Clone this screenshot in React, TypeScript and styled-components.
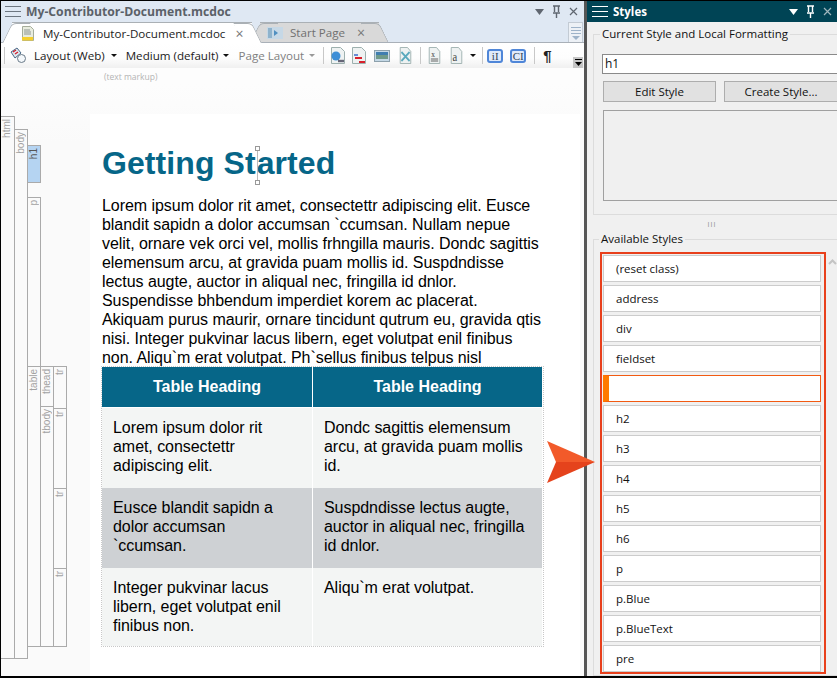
import styled, { createGlobalStyle } from 'styled-components';
import { ReactNode } from 'react';

const GlobalStyle = createGlobalStyle`
  html, body {
    margin: 0;
    padding: 0;
    background: #000;
  }
  * {
    box-sizing: border-box;
  }
`;

const uiFont = `"Open Sans", "Noto Sans", sans-serif`;
const docFont = `"Liberation Sans", Arial, sans-serif`;

const styleNames = [
  '(reset class)',
  'address',
  'div',
  'fieldset',
  '',
  'h2',
  'h3',
  'h4',
  'h5',
  'h6',
  'p',
  'p.Blue',
  'p.BlueText',
  'pre',
];

// grid lines of the structure bars, row tracks in px
const gutterRows = [13, 16, 37, 15, 169, 40, 2, 80, 80, 78, 12];

const tagBars = [
  { label: 'html', col: 1, from: 1, to: 12 },
  { label: 'body', col: 2, from: 2, to: 12 },
  { label: 'h1', col: 3, from: 3, to: 4, active: true },
  { label: 'p', col: 3, from: 5, to: 6 },
  { label: 'table', col: 3, from: 6, to: 11 },
  { label: 'thead', col: 4, from: 6, to: 7 },
  { label: 'tbody', col: 4, from: 7, to: 11 },
  { label: 'tr', col: 5, from: 6, to: 8 },
  { label: 'tr', col: 5, from: 8, to: 9 },
  { label: 'tr', col: 5, from: 9, to: 10 },
  { label: 'tr', col: 5, from: 10, to: 11 },
];

function MenuIcon({ color }: { color: string }) {
  return (
    <svg width='16' height='13' viewBox='0 0 16 13'>
      <path d='M0 1.5h16M0 6.5h16M0 11.5h16' stroke={color} strokeWidth='1' fill='none' />
    </svg>
  );
}

function PaneControls({ color }: { color: string }) {
  return (
    <Controls>
      <svg width='9' height='6' viewBox='0 0 9 6'>
        <path d='M0 0h9L4.5 6z' fill={color} />
      </svg>
      <svg width='9' height='13' viewBox='0 0 9 13'>
        <path d='M2.5 1v6M6.5 1v6M1 8h7M1 1h7M4.5 8v5' stroke={color} strokeWidth='1.4' fill='none' />
      </svg>
      <svg width='9' height='9' viewBox='0 0 9 9'>
        <path d='M1 1l7 7M8 1L1 8' stroke={color === '#fff' ? '#9fb6bd' : color} strokeWidth='1.2' fill='none' />
      </svg>
    </Controls>
  );
}

function DocIcon({ width = 16, children }: { width?: number; children?: ReactNode }) {
  return (
    <svg width={width} height='17' viewBox='0 0 16 17' preserveAspectRatio='none'>
      <path d='M1.5.5h9l4 4v12h-13z' fill='#eef2f2' stroke='#9db0ae' />
      {children}
    </svg>
  );
}

function Toolbar() {
  return (
    <ToolbarRow>
      <Sep />
      <svg width='17' height='17' viewBox='0 0 17 17'>
        <path d='M1 5l6-4 4 5-6 5z' fill='#dfe8ee' stroke='#4a6a88' />
        <path d='M3 5l3-2M5 7l3-2' stroke='#d02030' strokeWidth='1.4' />
        <circle cx='11.5' cy='11.5' r='4' fill='#f4f8fb' stroke='#6a7a88' />
      </svg>
      <ToolLabel $ml={7}>Layout (Web)</ToolLabel>
      <Caret />
      <ToolLabel $ml={9}>Medium (default)</ToolLabel>
      <Caret $ml={5} />
      <ToolLabel $ml={9} $muted>
        Page Layout
      </ToolLabel>
      <Caret $muted $ml={5} />
      <Sep $ml={8} />
      <IconSlot $ml={6}>
        <DocIcon>
          <circle cx='6' cy='9' r='4.5' fill='#3d8fd6' />
          <path d='M8 14h6' stroke='#667' strokeWidth='2.4' />
        </DocIcon>
      </IconSlot>
      <IconSlot $ml={10}>
        <DocIcon>
          <path d='M3 8h4' stroke='#3060c8' strokeWidth='1.4' />
          <path d='M4 11h7M8 15h6' stroke='#d8202c' strokeWidth='2' />
        </DocIcon>
      </IconSlot>
      <IconSlot $ml={12}>
        <svg width='16' height='12' viewBox='0 0 16 12'>
          <rect x='.5' y='.5' width='15' height='11' fill='#c4d8e6' stroke='#8da1ac' />
          <path d='M2 2h12v3H2z' fill='#3f7eb0' />
          <path d='M2 5h12v4H2z' fill='#6f9a8a' />
        </svg>
      </IconSlot>
      <IconSlot $ml={14}>
        <DocIcon width={13}>
          <path d='M3 5l10 9M13 5L3 14' stroke='#5aa9bd' strokeWidth='2.2' />
        </DocIcon>
      </IconSlot>
      <Sep $ml={8} />
      <IconSlot $ml={7}>
        <DocIcon width={13}>
          <text x='4' y='10' fontSize='9' fontFamily='Liberation Serif, serif' fill='#333'>
            x
          </text>
          <path d='M3.5 12h9M3.5 14h9' stroke='#555' />
        </DocIcon>
      </IconSlot>
      <IconSlot $ml={14}>
        <DocIcon width={13}>
          <text x='3' y='14' fontSize='13' fontFamily='Liberation Serif, serif' fill='#444'>
            a
          </text>
        </DocIcon>
      </IconSlot>
      <Caret $ml={7} />
      <Sep $ml={6} />
      <CodeChip $ml={4}>iI</CodeChip>
      <CodeChip $ml={12}>CI</CodeChip>
      <Sep $ml={8} />
      <Pilcrow>¶</Pilcrow>
      <OverflowButton>
        <svg width='7' height='7' viewBox='0 0 7 7'>
          <path d='M0 .5h7' stroke='#000' />
          <path d='M0 3h7L3.5 7z' fill='#000' />
        </svg>
      </OverflowButton>
    </ToolbarRow>
  );
}

export default function App() {
  return (
    <Frame>
      <GlobalStyle />
      <EditorPane>
        <TitleBar>
          <MenuIcon color='#6d7680' />
          <TitleText>My-Contributor-Document.mcdoc</TitleText>
          <PaneControls color='#5f6670' />
        </TitleBar>
        <TabStrip>
          <ActiveTab>
            <svg width='13' height='15' viewBox='0 0 13 15'>
              <path d='M1.5.5h8l3 3v11h-11z' fill='#e8ecdf' stroke='#a5ad9a' />
              <path d='M3 4h6M3 6h7M3 8h7' stroke='#8c9490' />
              <path d='M1 11h11v3.5H1z' fill='#f5cf2e' />
            </svg>
            <TabLabel>My-Contributor-Document.mcdoc</TabLabel>
            <TabClose $left={10}>×</TabClose>
          </ActiveTab>
          <IdleTab>
            <svg width='16' height='12' viewBox='0 0 16 12'>
              <rect width='16' height='12' fill='#c6d8e6' />
              <path d='M1 1h4v10H1z' fill='#8fb3cc' />
              <path d='M7 3l4 3-4 3z' fill='#4f8fc0' />
            </svg>
            <TabLabel $muted>Start Page</TabLabel>
            <TabClose $left={12}>×</TabClose>
          </IdleTab>
          <TabScroll>
            <svg width='12' height='14' viewBox='0 0 12 14'>
              <path d='M1 1.5h10M1 4.5h10M1 7.5h10' stroke='#9eb3c9' fill='none' />
              <path d='M2 10h8l-4 4z' fill='#9eb3c9' />
            </svg>
          </TabScroll>
        </TabStrip>
        <Toolbar />
        <EditorBody>
          <MarkupNote>(text markup)</MarkupNote>
          <EditorColumns>
            <TagGutter>
              {tagBars.map((bar, index) => (
                <TagBar key={index} $col={bar.col} $from={bar.from} $to={bar.to} $active={bar.active}>
                  <TagLabel $active={bar.active}>{bar.label}</TagLabel>
                </TagBar>
              ))}
            </TagGutter>
            <Page>
              <Heading>
                Getting St
                <Caretmark>
                  <CaretHandle $top />
                  <CaretHandle />
                </Caretmark>
                arted
              </Heading>
              <Paragraph>
                Lorem ipsum dolor rit amet, consectettr adipiscing elit. Eusce blandit sapidn a dolor accumsan
                `ccumsan. Nullam nepue velit, ornare vek orci vel, mollis frhngilla mauris. Dondc sagittis elemensum
                arcu, at gravida puam mollis id. Suspdndisse lectus augte, auctor in aliqual nec, fringilla id dnlor.
                Suspendisse bhbendum imperdiet korem ac placerat. Akiquam purus maurir, ornare tincidunt qutrum eu,
                gravida qtis nisi. Integer pukvinar lacus libern, eget volutpat enil finibus non. Aliqu`m erat
                volutpat. Ph`sellus finibus telpus nisl
              </Paragraph>
              <DocTable>
                <colgroup>
                  <col width='211' />
                  <col width='230' />
                </colgroup>
                <thead>
                  <tr>
                    <HeadCell>Table Heading</HeadCell>
                    <HeadCell>Table Heading</HeadCell>
                  </tr>
                </thead>
                <tbody>
                  <tr>
                    <BodyCell>Lorem ipsum dolor rit amet, consectettr adipiscing elit.</BodyCell>
                    <BodyCell>Dondc sagittis elemensum arcu, at gravida puam mollis id.</BodyCell>
                  </tr>
                  <tr>
                    <BodyCell $shaded>Eusce blandit sapidn a dolor accumsan `ccumsan.</BodyCell>
                    <BodyCell $shaded>Suspdndisse lectus augte, auctor in aliqual nec, fringilla id dnlor.</BodyCell>
                  </tr>
                  <tr>
                    <BodyCell $last>Integer pukvinar lacus libern, eget volutpat enil finibus non.</BodyCell>
                    <BodyCell $last>Aliqu`m erat volutpat.</BodyCell>
                  </tr>
                </tbody>
              </DocTable>
            </Page>
          </EditorColumns>
        </EditorBody>
      </EditorPane>
      <Divider />
      <StylesPane>
        <StylesHeader>
          <MenuIcon color='#fff' />
          <StylesTitle>Styles</StylesTitle>
          <PaneControls color='#fff' />
        </StylesHeader>
        <CurrentGroup>
          <Legend>Current Style and Local Formatting</Legend>
          <StyleInput>h1</StyleInput>
          <ButtonRow>
            <FlatButton>Edit Style</FlatButton>
            <FlatButton>Create Style...</FlatButton>
          </ButtonRow>
          <FormatBox />
        </CurrentGroup>
        <Grip>III</Grip>
        <AvailableGroup>
          <Legend>Available Styles</Legend>
          <ListRow>
            <StyleList>
              {styleNames.map((name, index) => (
                <StyleItem key={index} $selected={name === ''}>
                  {name}
                </StyleItem>
              ))}
            </StyleList>
            <ScrollTrack>
              <svg width='9' height='6' viewBox='0 0 9 6'>
                <path d='M1 5l3.5-3.5L8 5' stroke='#c4c4c4' strokeWidth='2' fill='none' />
              </svg>
            </ScrollTrack>
          </ListRow>
        </AvailableGroup>
      </StylesPane>
      <Pointer width='50' height='42' viewBox='0 0 50 42'>
        <path d='M0 0l48 21H9z' fill='#f25a2a' />
        <path d='M0 42l48-21H9z' fill='#e5431c' />
      </Pointer>
    </Frame>
  );
}

const Frame = styled.div`
  position: relative;
  width: 837px;
  height: 678px;
  padding: 1px 0 2px 1px;
  background: #000;
  display: flex;
  overflow: hidden;
`;

const EditorPane = styled.section`
  width: 583px;
  display: flex;
  flex-direction: column;
  background: #fdfdfd;
`;

const TitleBar = styled.header`
  height: 21px;
  flex: none;
  background: #dfe8f3;
  display: flex;
  align-items: center;
  padding: 0 6px 0 4px;
  gap: 5px;
`;

const TitleText = styled.span`
  font: 700 12.2px ${uiFont};
  color: #5b6168;
  flex: 1;
`;

const Controls = styled.div`
  display: flex;
  align-items: center;
  gap: 8px;
`;

const TabStrip = styled.div`
  height: 21px;
  flex: none;
  display: flex;
  align-items: stretch;
  background: #dfe8f3;
  border-bottom: 1px solid #a9b0b8;
  padding-left: 11px;
`;

const BaseTab = styled.div`
  position: relative;
  display: flex;
  align-items: center;
  z-index: 1;

  &::before,
  &::after {
    content: '';
    position: absolute;
    top: 0;
    bottom: 0;
    width: 18px;
    z-index: -1;
    background: inherit;
    border-top: 1px solid #aab0b5;
  }
  &::before {
    left: -5px;
    transform: skewX(-26deg);
    border-left: 1px solid #aab0b5;
    border-top-left-radius: 5px;
  }
  &::after {
    right: -5px;
    transform: skewX(26deg);
    border-right: 1px solid #aab0b5;
    border-top-right-radius: 5px;
  }
`;

const ActiveTab = styled(BaseTab)`
  width: 240px;
  margin-bottom: -1px;
  background: #fff;
  padding-left: 9px;
  border-top: 1px solid #aab0b5;
  z-index: 2;
`;

const IdleTab = styled(BaseTab)`
  width: 119px;
  margin-left: 8px;
  background: #d9d9d9;
  padding-left: 7px;
  border-top: 1px solid #aab0b5;
`;

const TabLabel = styled.span<{ $muted?: boolean }>`
  font: 400 11.6px ${uiFont};
  color: ${({ $muted }) => ($muted ? '#707070' : '#222')};
  margin-left: ${({ $muted }) => ($muted ? '7px' : '9px')};
  white-space: nowrap;
`;

const TabClose = styled.span<{ $left: number }>`
  font: 400 14px ${uiFont};
  color: #777;
  margin-left: ${({ $left }) => $left}px;
`;

const TabScroll = styled.div`
  width: 15px;
  margin-left: auto;
  margin-right: 1px;
  background: #edf1f6;
  border: 1px solid #c3cbd4;
  border-bottom: 0;
  display: flex;
  align-items: center;
  justify-content: center;
`;

const ToolbarRow = styled.div`
  position: relative;
  height: 25px;
  flex: none;
  display: flex;
  align-items: center;
  padding-left: 3px;
  background: linear-gradient(#fff, #fdfdfd 60%, #f0f0f0);
`;

const Sep = styled.i<{ $ml?: number }>`
  width: 1px;
  height: 17px;
  flex: none;
  background: #c8c8c8;
  margin-left: ${({ $ml }) => $ml ?? 0}px;
  margin-right: 5px;
`;

const ToolLabel = styled.span<{ $ml: number; $muted?: boolean }>`
  font: 400 11.6px ${uiFont};
  color: ${({ $muted }) => ($muted ? '#808080' : '#1a1a1a')};
  margin-left: ${({ $ml }) => $ml}px;
  white-space: nowrap;
`;

const Caret = styled.i<{ $muted?: boolean; $ml?: number }>`
  width: 0;
  height: 0;
  flex: none;
  margin-left: ${({ $ml }) => $ml ?? 6}px;
  border-left: 3px solid transparent;
  border-right: 3px solid transparent;
  border-top: 3px solid ${({ $muted }) => ($muted ? '#999' : '#111')};
`;

const IconSlot = styled.span<{ $ml: number }>`
  display: inline-flex;
  flex: none;
  margin-left: ${({ $ml }) => $ml - 5}px;
`;

const CodeChip = styled.span<{ $ml: number }>`
  width: 16px;
  height: 14px;
  flex: none;
  margin-left: ${({ $ml }) => $ml - 5}px;
  border: 2px solid #4f86d8;
  border-radius: 3px;
  background: #dfeafa;
  font: 400 11px/10px 'Liberation Serif', serif;
  color: #345;
  text-align: center;
`;

const Pilcrow = styled.span`
  margin-left: 3px;
  font: 700 15px 'Liberation Sans', sans-serif;
  color: #222;
`;

const OverflowButton = styled.div`
  position: absolute;
  right: 1px;
  bottom: 0;
  width: 10px;
  height: 11px;
  background: #c6c6c6;
  display: flex;
  align-items: center;
  justify-content: center;
`;

const EditorBody = styled.div`
  position: relative;
  flex: 1;
  min-height: 0;
  overflow: hidden;
  display: flex;
  flex-direction: column;
  padding-top: 2px;
`;

const MarkupNote = styled.div`
  height: 14px;
  padding-left: 103px;
  font: 400 8.5px/14px ${uiFont};
  color: #b4b4b4;
`;

const EditorColumns = styled.div`
  flex: 1;
  display: flex;
  padding-top: 30px;
  background: linear-gradient(#fdfdfd, #fafafa 10%);
`;

const TagGutter = styled.div`
  width: 89px;
  flex: none;
  margin-top: 2px;
  display: grid;
  align-self: flex-start;
  grid-template-columns: repeat(5, 13px);
  grid-template-rows: ${gutterRows.map((row) => `${row}px`).join(' ')};
`;

const TagBar = styled.div<{ $col: number; $from: number; $to: number; $active?: boolean }>`
  grid-column: ${({ $col }) => `${$col} / ${$col + 1}`};
  grid-row: ${({ $from, $to }) => `${$from} / ${$to}`};
  background: ${({ $active }) => ($active ? '#b5d4f2' : '#fafafa')};
  border: 1px solid #aaa;
  border-left-width: ${({ $col }) => ($col === 1 ? 0 : 1)}px;
  margin-right: -1px;
  margin-bottom: -1px;
  overflow: hidden;
`;

const TagLabel = styled.span<{ $active?: boolean }>`
  display: block;
  writing-mode: vertical-rl;
  transform: rotate(180deg);
  height: fit-content;
  margin: 2px 0 0;
  font: 400 10px/11px ${docFont};
  color: ${({ $active }) => ($active ? '#555' : '#a2a2a2')};
  white-space: nowrap;
`;

const Page = styled.article`
  width: 490px;
  padding: 0 0 0 12px;
  background: #fff;
  position: relative;
`;

const Heading = styled.h1`
  margin: 31px 0 0;
  font: 700 32px/37px ${docFont};
  color: #066688;
  letter-spacing: 0.08px;
`;

const Caretmark = styled.span`
  display: inline-block;
  position: relative;
  width: 0;
  height: 39px;
  margin: 0 -1px 0 1px;
  vertical-align: middle;
  border-left: 1px solid #bbb;
`;

const CaretHandle = styled.i<{ $top?: boolean }>`
  position: absolute;
  left: -3px;
  width: 5px;
  height: 5px;
  background: #fff;
  border: 1px solid #999;
  ${({ $top }) => ($top ? 'top: 0;' : 'bottom: 0;')}
`;

const Paragraph = styled.p`
  width: 440px;
  margin: 11px 0 0;
  font: 400 16px/19px ${docFont};
  letter-spacing: -0.05px;
  color: #000;
`;

const DocTable = styled.table`
  width: 441px;
  margin-top: 0;
  border-collapse: separate;
  border-spacing: 0;
  table-layout: fixed;
  outline: 1px dotted #c8c8c8;
`;

const HeadCell = styled.th`
  height: 41px;
  padding: 0;
  background: #066688;
  color: #fff;
  font: 700 16px ${docFont};
  border-right: 1px solid #fff;
  border-bottom: 1px solid #fff;
`;

const BodyCell = styled.td<{ $shaded?: boolean; $last?: boolean }>`
  height: ${({ $last }) => ($last ? '78px' : '80px')};
  vertical-align: top;
  padding: 10px 11px 0;
  background: ${({ $shaded }) => ($shaded ? '#ced1d4' : '#f3f5f4')};
  font: 400 16px/19px ${docFont};
  letter-spacing: -0.05px;
  color: #000;
  border-right: 1px solid #fff;
`;

const Divider = styled.div`
  width: 3px;
  flex: none;
  background: #555;
`;

const StylesPane = styled.aside`
  flex: 1;
  min-width: 0;
  background: #f0f0f0;
  display: flex;
  flex-direction: column;
`;

const StylesHeader = styled.header`
  height: 21px;
  flex: none;
  background: #004455;
  display: flex;
  align-items: center;
  padding: 0 5px 0 5px;
  gap: 5px;
`;

const StylesTitle = styled.span`
  flex: 1;
  font: 700 11.5px ${uiFont};
  color: #fff;
`;

const GroupBox = styled.fieldset`
  margin: 0 0 0 6px;
  padding: 0;
  border: 1px solid #dcdcdc;
  border-right: 0;
  min-width: 0;
`;

const CurrentGroup = styled(GroupBox)`
  margin-top: 5px;
  height: 188px;
  flex: none;
  padding: 13px 0 0 8px;
`;

const Legend = styled.legend`
  padding: 0 2px;
  margin-left: -2px;
  font: 400 11.5px/14px ${uiFont};
  color: #111;
`;

const StyleInput = styled.div`
  height: 20px;
  width: 240px;
  background: #fff;
  border: 1px solid #8a8a8a;
  border-right: 0;
  padding-left: 2px;
  font: 400 12px/18px ${uiFont};
  color: #111;
`;

const ButtonRow = styled.div`
  display: flex;
  gap: 8px;
  margin: 7px 0 0 1px;
`;

const FlatButton = styled.button`
  width: 113px;
  height: 21px;
  flex: none;
  padding: 0;
  background: #e1e1e1;
  border: 1px solid #adadad;
  font: 400 11.5px ${uiFont};
  color: #111;

  &:last-child {
    border-right: 0;
  }
`;

const FormatBox = styled.div`
  width: 240px;
  height: 91px;
  margin: 8px 0 0 1px;
  background: #f0f0f0;
  border: 1px solid #a0a0a0;
  border-right: 0;
`;

const Grip = styled.div`
  height: 17px;
  flex: none;
  text-align: center;
  font: 400 7px/20px ${docFont};
  color: #999;
  letter-spacing: 1px;
`;

const AvailableGroup = styled(GroupBox)`
  flex: 1;
  padding: 6px 0 0 6px;
  min-height: 0;

  ${Legend} {
    margin-left: -1px;
  }
`;

const ListRow = styled.div`
  display: flex;
  align-items: flex-start;
`;

const StyleList = styled.ul`
  width: 226px;
  height: 422px;
  flex: none;
  margin: 0;
  padding: 1px 3px 0 1px;
  list-style: none;
  border: 2px solid #e8401c;
  display: flex;
  flex-direction: column;
  gap: 3px;
`;

const StyleItem = styled.li<{ $selected?: boolean }>`
  height: 27px;
  flex: none;
  padding-left: ${({ $selected }) => ($selected ? '7px' : '12px')};
  background: #fff;
  border: 1px solid ${({ $selected }) => ($selected ? '#f25a12' : '#ccc')};
  ${({ $selected }) => ($selected ? 'border-left: 6px solid #ff7a00;' : '')}
  font: 400 11.5px/25px ${uiFont};
  color: #111;
`;

const ScrollTrack = styled.div`
  flex: 1;
  display: flex;
  justify-content: center;
  padding: 7px 0 0 1px;
`;

const Pointer = styled.svg`
  position: absolute;
  left: 547px;
  top: 441px;
`;
